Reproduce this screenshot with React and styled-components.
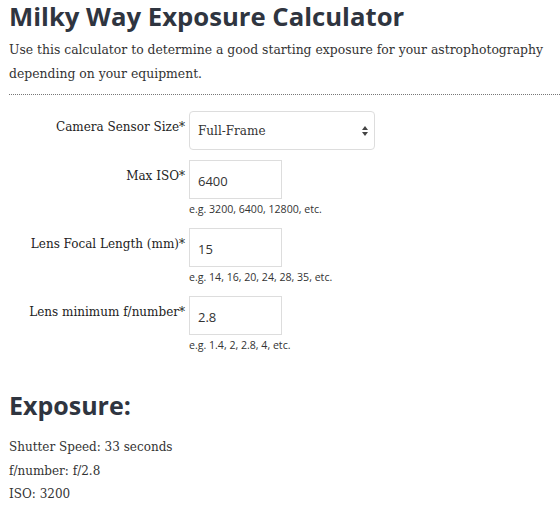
import { Fragment } from "react";
import styled, { createGlobalStyle } from "styled-components";

const GlobalStyle = createGlobalStyle`
  body {
    margin: 0;
    background: #ffffff;
  }
`;

const PageUI = styled.div`
  width: 560px;
  height: 506px;
  overflow: hidden;
  padding: 0 0 0 9px;
  box-sizing: border-box;
  font-family: "DejaVu Serif", serif;
  color: #333;
`;

const TitleUI = styled.h1`
  font-family: "Open Sans", sans-serif;
  font-weight: 700;
  font-size: 25.7px;
  line-height: 34px;
  margin: 0;
  color: #2f3540;
`;

const IntroUI = styled.p`
  font-size: 12.4px;
  line-height: 24px;
  margin: 4px 0 0 0;
  color: #333;
`;

const DividerUI = styled.div`
  border-bottom: 1px dotted #777;
  margin: 8px 0 0 0;
`;

const FormUI = styled.div`
  display: grid;
  grid-template-columns: 176px auto;
  column-gap: 4px;
  margin: 16px 0 0 0;
`;

const LabelUI = styled.div`
  text-align: right;
  font-size: 12px;
  line-height: 16px;
  padding: 8px 0 0 0;
  color: #222;
`;

const FieldUI = styled.div`
  display: flex;
  flex-direction: column;
  align-items: flex-start;
  margin: 0 0 ${(p) => p.gap}px 0;
`;

const SelectUI = styled.div`
  width: 186px;
  height: 39px;
  box-sizing: border-box;
  border: 1px solid #ddd;
  border-radius: 4px;
  display: flex;
  align-items: center;
  justify-content: space-between;
  padding: 0 6px 0 8px;
  font-size: 12px;
  color: #333;
`;

const InputUI = styled.div`
  width: 93px;
  height: 39px;
  box-sizing: border-box;
  border: 1px solid #ddd;
  display: flex;
  align-items: center;
  padding: 2px 0 0 8px;
  font-family: "Open Sans", sans-serif;
  font-size: 13px;
  color: #333;
`;

const HintUI = styled.div`
  font-family: "Open Sans", sans-serif;
  font-size: 10.6px;
  line-height: 14px;
  margin: 3px 0 0 0;
  color: #333;
`;

const ResultTitleUI = styled.h2`
  font-family: "Open Sans", sans-serif;
  font-weight: 700;
  font-size: 25px;
  line-height: 32px;
  margin: 25px 0 0 0;
  color: #2f3540;
`;

const ResultUI = styled.div`
  font-size: 12px;
  line-height: 23.5px;
  margin: 15px 0 0 0;
  color: #333;
`;

function Arrows() {
  return (
    <svg width="6" height="10" viewBox="0 0 6 10">
      <path d="M3 0 L6 4 L0 4 Z M3 10 L6 6 L0 6 Z" fill="#444" />
    </svg>
  );
}

const fields = [
  { label: "Max ISO*", value: "6400", hint: "e.g. 3200, 6400, 12800, etc." },
  { label: "Lens Focal Length (mm)*", value: "15", hint: "e.g. 14, 16, 20, 24, 28, 35, etc." },
  { label: "Lens minimum f/number*", value: "2.8", hint: "e.g. 1.4, 2, 2.8, 4, etc." },
];

export default function App() {
  return (
    <PageUI>
      <GlobalStyle />
      <TitleUI>Milky Way Exposure Calculator</TitleUI>
      <IntroUI>
        Use this calculator to determine a good starting exposure for your astrophotography
        depending on your equipment.
      </IntroUI>
      <DividerUI />
      <FormUI>
        <LabelUI>Camera Sensor Size*</LabelUI>
        <FieldUI gap={10}>
          <SelectUI>
            <span>Full-Frame</span>
            <Arrows />
          </SelectUI>
        </FieldUI>
        {fields.map((f) => (
          <Fragment key={f.label}>
            <LabelUI>{f.label}</LabelUI>
            <FieldUI gap={12}>
              <InputUI>{f.value}</InputUI>
              <HintUI>{f.hint}</HintUI>
            </FieldUI>
          </Fragment>
        ))}
      </FormUI>
      <ResultTitleUI>Exposure:</ResultTitleUI>
      <ResultUI>
        Shutter Speed: 33 seconds
        <br />
        f/number: f/2.8
        <br />
        ISO: 3200
      </ResultUI>
    </PageUI>
  );
}
